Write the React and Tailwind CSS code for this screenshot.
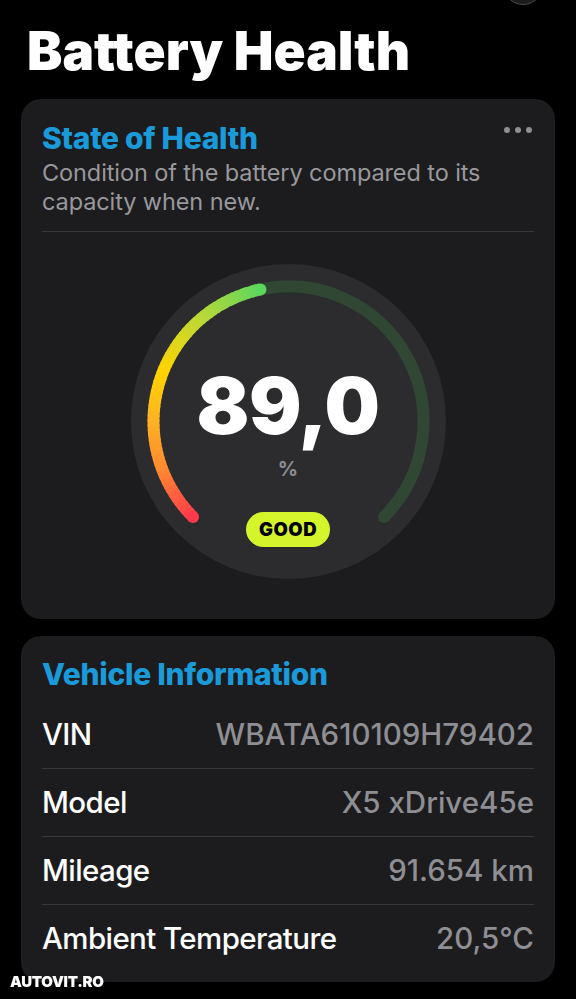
import React from 'react';

const CX = 157.5;
const CY = 157.5;
const R = 135;

const stops = [
  [0, [255, 58, 74]],
  [0.2, [255, 138, 48]],
  [0.38, [255, 180, 34]],
  [0.54, [255, 212, 0]],
  [0.78, [184, 216, 58]],
  [1, [92, 214, 92]],
];

const colorAt = (t) => {
  for (let i = 0; i < stops.length - 1; i++) {
    const [t0, c0] = stops[i];
    const [t1, c1] = stops[i + 1];
    if (t >= t0 && t <= t1) {
      const k = (t - t0) / (t1 - t0);
      const c = c0.map((v, j) => Math.round(v + (c1[j] - v) * k));
      return `rgb(${c[0]},${c[1]},${c[2]})`;
    }
  }
  return 'rgb(92,214,92)';
};

const pt = (deg) => {
  const a = (deg * Math.PI) / 180;
  return [CX + R * Math.sin(a), CY - R * Math.cos(a)];
};

const arc = (d0, d1) => {
  const [x0, y0] = pt(d0);
  const [x1, y1] = pt(d1);
  const large = d1 - d0 > 180 ? 1 : 0;
  return `M ${x0} ${y0} A ${R} ${R} 0 ${large} 1 ${x1} ${y1}`;
};

const Gauge = () => {
  const start = -135;
  const end = -12;
  const n = 60;
  const segs = [];
  for (let i = 0; i < n; i++) {
    const a0 = start + ((end - start) * i) / n;
    const a1 = start + ((end - start) * (i + 1)) / n + 0.6;
    segs.push(
      <path
        key={i}
        d={arc(a0, Math.min(a1, end))}
        stroke={colorAt((i + 0.5) / n)}
        strokeWidth="12"
        fill="none"
      />
    );
  }
  const [sx, sy] = pt(start);
  const [ex, ey] = pt(end);

  return (
    <div className="relative w-[315px] h-[315px] rounded-full bg-[#2c2c2e] flex flex-col items-center">
      <svg className="absolute inset-0" width="315" height="315" viewBox="0 0 315 315">
        <path d={arc(end, 135)} stroke="#2f4733" strokeWidth="12" strokeLinecap="round" fill="none" />
        {segs}
        <circle cx={sx} cy={sy} r="6" fill={colorAt(0)} />
        <circle cx={ex} cy={ey} r="6" fill={colorAt(1)} />
      </svg>
      <div className="relative mt-[103px] text-[78px] leading-none font-black text-white tracking-[-0.5px]">
        89,0
      </div>
      <div className="relative mt-[14px] text-[20px] leading-none font-bold text-[#8e8e93]">%</div>
      <div className="relative mt-[33px] h-[35px] px-[13px] rounded-full bg-[#d4f52b] flex items-center text-[18.5px] font-black text-black tracking-[0.5px]">
        GOOD
      </div>
    </div>
  );
};

const rows = [
  ['VIN', 'WBATA610109H79402'],
  ['Model', 'X5 xDrive45e'],
  ['Mileage', '91.654 km'],
  ['Ambient Temperature', '20,5°C'],
];

export default function App() {
  return (
    <div className="relative min-h-[999px] bg-black font-['Inter',sans-serif] overflow-hidden">
      {/* cut-off button at the top */}
      <div className="absolute left-[503px] top-[-35px] w-[40px] h-[40px] rounded-full bg-[#1c1c1e] border-[1.5px] border-[#4a4a4c]" />

      <h1 className="pt-[25px] pl-[27px] text-[53px] leading-none font-black text-white">
        Battery Health
      </h1>

      {/* State of Health */}
      <div className="mx-[21px] mt-[21px] rounded-[20px] bg-[#1c1c1e] px-[21px] pt-[24px] pb-[40px]">
        <div className="flex justify-between items-start">
          <h2 className="text-[30px] leading-none font-extrabold text-[#1a9ad9] tracking-[-0.3px]">
            State of Health
          </h2>
          <div className="flex gap-[5px] mt-[4px] mr-[2px]">
            <span className="w-[6px] h-[6px] rounded-full bg-[#8e8e93]" />
            <span className="w-[6px] h-[6px] rounded-full bg-[#8e8e93]" />
            <span className="w-[6px] h-[6px] rounded-full bg-[#8e8e93]" />
          </div>
        </div>
        <p className="mt-[5px] text-[23.5px] leading-[29px] text-[#98989d] tracking-[-0.1px]">
          Condition of the battery compared to its capacity when new.
        </p>
        <div className="mt-[15px] h-px bg-[#38383a]" />
        <div className="mt-[32px] flex justify-center">
          <Gauge />
        </div>
      </div>

      {/* Vehicle Information */}
      <div className="mx-[21px] mt-[17px] rounded-[20px] bg-[#1c1c1e] px-[21px] pt-[23px] pb-[9px]">
        <h2 className="text-[30px] leading-none font-extrabold text-[#1a9ad9] tracking-[-0.3px]">
          Vehicle Information
        </h2>
        <div className="mt-[12px]">
          {rows.map(([label, value], i) => (
            <div
              key={label}
              className={`h-[68px] flex items-center justify-between ${
                i < rows.length - 1 ? 'border-b border-[#38383a]' : ''
              }`}
            >
              <span className="text-[29.5px] leading-none font-medium text-white tracking-[-0.6px]">{label}</span>
              <span className="text-[29.5px] leading-none font-medium text-[#8e8e93] tracking-[0px]">{value}</span>
            </div>
          ))}
        </div>
      </div>

      <div className="absolute left-[10px] top-[974px] text-[15px] leading-none font-black text-white tracking-[-0.3px] drop-shadow">
        AUTOVIT.RO
      </div>
    </div>
  );
}
